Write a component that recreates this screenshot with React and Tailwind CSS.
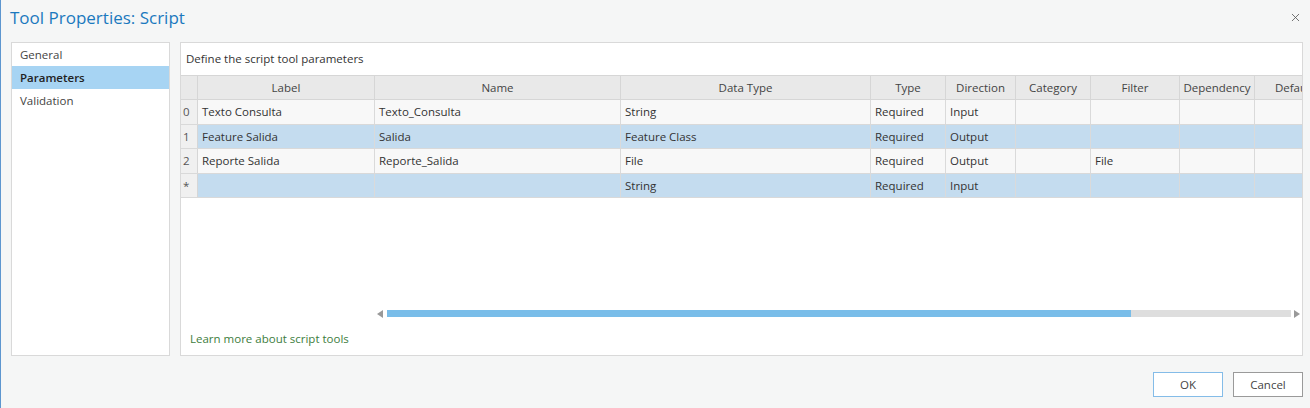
import { X } from "lucide-react";

const cols = [
  { key: "label", title: "Label", w: "w-[177px]" },
  { key: "name", title: "Name", w: "w-[246px]" },
  { key: "dataType", title: "Data Type", w: "w-[250px]" },
  { key: "type", title: "Type", w: "w-[75px]" },
  { key: "direction", title: "Direction", w: "w-[70px]" },
  { key: "category", title: "Category", w: "w-[75px]" },
  { key: "filter", title: "Filter", w: "w-[89px]" },
  { key: "dependency", title: "Dependency", w: "w-[75px]" },
  { key: "default", title: "Default", w: "w-[80px]" },
];

const rows = [
  { n: "0", label: "Texto Consulta", name: "Texto_Consulta", dataType: "String", type: "Required", direction: "Input" },
  { n: "1", label: "Feature Salida", name: "Salida", dataType: "Feature Class", type: "Required", direction: "Output", selected: true },
  { n: "2", label: "Reporte Salida", name: "Reporte_Salida", dataType: "File", type: "Required", direction: "Output", filter: "File" },
  { n: "*", dataType: "String", type: "Required", direction: "Input", selected: true },
];

const navItems = ["General", "Parameters", "Validation"];

export default function App() {
  return (
    <div
      className="w-[1310px] h-[408px] bg-[#f5f6f6] border-l border-[#5d96cf] flex flex-col text-[11.5px] text-[#333] overflow-hidden"
      style={{ fontFamily: '"Open Sans", "Noto Sans", sans-serif' }}
    >
      <div className="h-[34px] flex items-center justify-between pl-[9px] pr-[8px]">
        <h1 className="text-[17px] text-[#1b79be] leading-none">Tool Properties: Script</h1>
        <X className="w-[13px] h-[13px] text-[#555]" strokeWidth={1.5} />
      </div>

      <div className="mt-[8px] h-[314px] flex gap-[10px] pl-[10px] pr-[7px]">
        <div className="w-[159px] bg-white border border-[#d9d9d9] flex flex-col">
          {navItems.map((item) => (
            <div
              key={item}
              className={
                item === "Parameters"
                  ? "h-[23px] flex items-center pl-[8px] bg-[#a7d4f3] font-semibold text-[#222]"
                  : "h-[23px] flex items-center pl-[8px] text-[#444]"
              }
            >
              {item}
            </div>
          ))}
        </div>

        <div className="flex-1 bg-white border border-[#d9d9d9] flex flex-col overflow-hidden">
          <div className="h-[32px] flex items-center pl-[5px] text-[#333]">Define the script tool parameters</div>

          <div className="overflow-hidden">
            <div className="flex w-max h-[25px] bg-[#e9e9e9] border-y border-[#d6d6d6]">
              <div className="w-[17px] border-r border-[#d6d6d6]" />
              {cols.map((c) => (
                <div key={c.key} className={`${c.w} border-r border-[#d6d6d6] flex items-center justify-center text-[#444] whitespace-nowrap`}>
                  {c.title}
                </div>
              ))}
            </div>
            {rows.map((r) => (
              <div
                key={r.n}
                className={`flex w-max h-[24.5px] border-b border-[#d9d9d9] ${r.selected ? "bg-[#c4dcef]" : "bg-[#f8f8f8]"}`}
              >
                <div className="w-[17px] bg-[#f0f0f0] border-r border-[#d6d6d6] flex items-center pl-[2px] text-[#555]">
                  {r.n}
                </div>
                {cols.map((c) => (
                  <div key={c.key} className={`${c.w} border-r border-[#dadada] flex items-center pl-[4px] whitespace-nowrap`}>
                    {r[c.key] || ""}
                  </div>
                ))}
              </div>
            ))}
          </div>

          <div className="mt-auto h-[7px] flex items-center pl-[196px] pr-[2px]">
            <div className="w-0 h-0 border-y-[4px] border-y-transparent border-r-[6px] border-r-[#999]" />
            <div className="flex-1 h-[7px] ml-[4px] mr-[3px] bg-[#dedede] flex">
              <div className="w-[744px] h-full bg-[#79bde9]" />
            </div>
            <div className="w-0 h-0 border-y-[4px] border-y-transparent border-l-[6px] border-l-[#999]" />
          </div>

          <div className="mt-[14px] mb-[8px] h-[16px] leading-[16px] pl-[9px] text-[#3d7d3d]">
            Learn more about script tools
          </div>
        </div>
      </div>

      <div className="flex justify-end gap-[10px] pr-[7px] pt-[16px]">
        <button className="w-[70px] h-[25px] bg-white border border-[#84bce8] text-[#444]">OK</button>
        <button className="w-[70px] h-[25px] bg-white border border-[#9a9a9a] text-[#444]">Cancel</button>
      </div>
    </div>
  );
}
